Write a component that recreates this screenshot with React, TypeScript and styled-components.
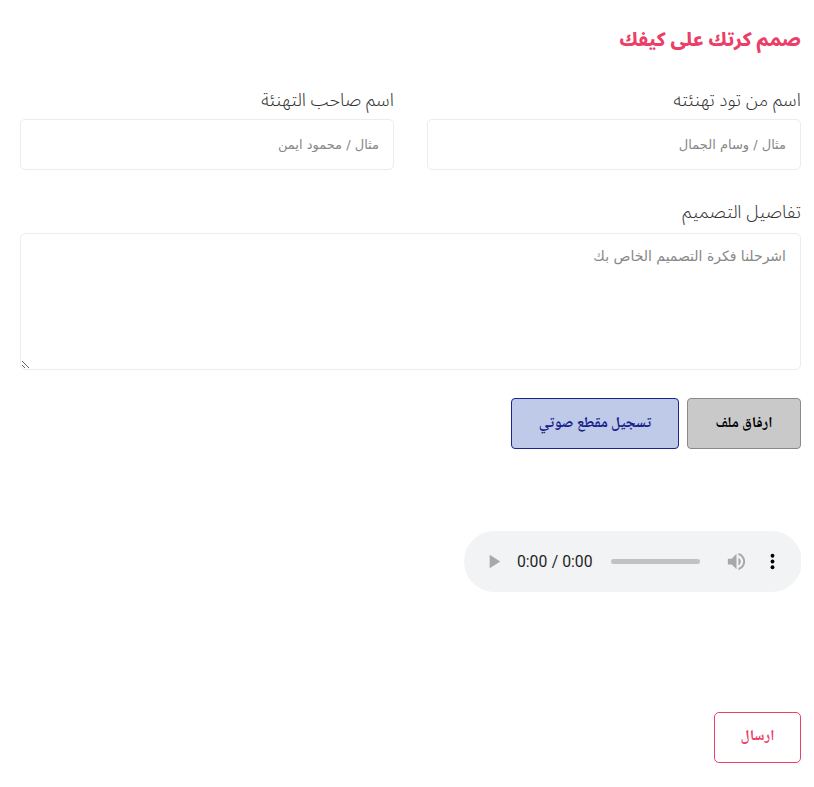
import React from 'react';
import styled, { createGlobalStyle } from 'styled-components';

const GlobalStyle = createGlobalStyle`
  body {
    margin: 0;
    background: #fff;
    font-family: 'Noto Sans Arabic', 'DejaVu Sans', 'Noto Sans', sans-serif;
  }
`;

const Page = styled.form`
  direction: rtl;
  display: flex;
  flex-direction: column;
  padding: 28px 13px 20px 20px;
`;

const Title = styled.h2`
  margin: 0 0 38px;
  font-size: 19px;
  line-height: 24px;
  font-weight: 800;
  color: #ec3f68;
`;

const FieldRow = styled.div`
  display: grid;
  grid-template-columns: 1fr 1fr;
  gap: 33px;
`;

const Field = styled.div`
  display: flex;
  flex-direction: column;
`;

const Label = styled.label`
  font-size: 18px;
  line-height: 20px;
  font-weight: 300;
  color: #333;
  margin-bottom: 9px;
`;

const TextInput = styled.input`
  height: 51px;
  box-sizing: border-box;
  border: 1px solid #ececec;
  border-radius: 5px;
  padding: 0 14px;
  font-size: 13px;
  font-family: 'DejaVu Sans', sans-serif;
  outline: none;
  &::placeholder {
    color: #888;
  }
`;

const DetailsField = styled(Field)`
  margin-top: 32px;
  & > label {
    margin-bottom: 11px;
  }
`;

const TextArea = styled.textarea`
  height: 137px;
  box-sizing: border-box;
  border: 1px solid #ececec;
  border-radius: 5px;
  padding: 14px;
  font-size: 14px;
  font-family: 'DejaVu Sans', sans-serif;
  outline: none;
  &::placeholder {
    color: #888;
  }
`;

const ButtonRow = styled.div`
  display: flex;
  gap: 8px;
  margin-top: 28px;
`;

const ActionButton = styled.button<{ $tone: 'gray' | 'blue' }>`
  height: 51px;
  width: ${(p) => (p.$tone === 'gray' ? '114px' : '168px')};
  padding: 0;
  border-radius: 4px;
  font-family: 'Noto Naskh Arabic', 'DejaVu Sans', serif;
  font-weight: bold;
  font-size: 15px;
  cursor: pointer;
  border: 1px solid ${(p) => (p.$tone === 'gray' ? '#8a8a8a' : '#1b2590')};
  background: ${(p) => (p.$tone === 'gray' ? '#c9c9c9' : '#bfcae9')};
  color: ${(p) => (p.$tone === 'gray' ? '#000' : '#17218a')};
`;

const AudioRow = styled.div`
  display: flex;
  margin-top: 82px;
`;

const Player = styled.audio`
  width: 300px;
  zoom: 1.125;
  direction: ltr;
`;

const SendRow = styled.div`
  display: flex;
  margin-top: 120px;
`;

const SendButton = styled.button`
  width: 87px;
  height: 51px;
  background: #fff;
  border: 1px solid #ec3f68;
  border-radius: 5px;
  color: #ec3f68;
  font-family: 'Noto Naskh Arabic', 'DejaVu Sans', serif;
  font-weight: bold;
  font-size: 15px;
  cursor: pointer;
`;

export default function App() {
  return (
    <>
      <GlobalStyle />
      <Page onSubmit={(e) => e.preventDefault()}>
        <Title>صمم كرتك على كيفك</Title>
        <FieldRow>
          <Field>
            <Label>اسم من تود تهنئته</Label>
            <TextInput placeholder="مثال / وسام الجمال" />
          </Field>
          <Field>
            <Label>اسم صاحب التهنئة</Label>
            <TextInput placeholder="مثال / محمود ايمن" />
          </Field>
        </FieldRow>
        <DetailsField>
          <Label>تفاصيل التصميم</Label>
          <TextArea placeholder="اشرحلنا فكرة التصميم الخاص بك" />
        </DetailsField>
        <ButtonRow>
          <ActionButton type="button" $tone="gray">ارفاق ملف</ActionButton>
          <ActionButton type="button" $tone="blue">تسجيل مقطع صوتي</ActionButton>
        </ButtonRow>
        <AudioRow>
          <Player controls />
        </AudioRow>
        <SendRow>
          <SendButton type="submit">ارسال</SendButton>
        </SendRow>
      </Page>
    </>
  );
}
